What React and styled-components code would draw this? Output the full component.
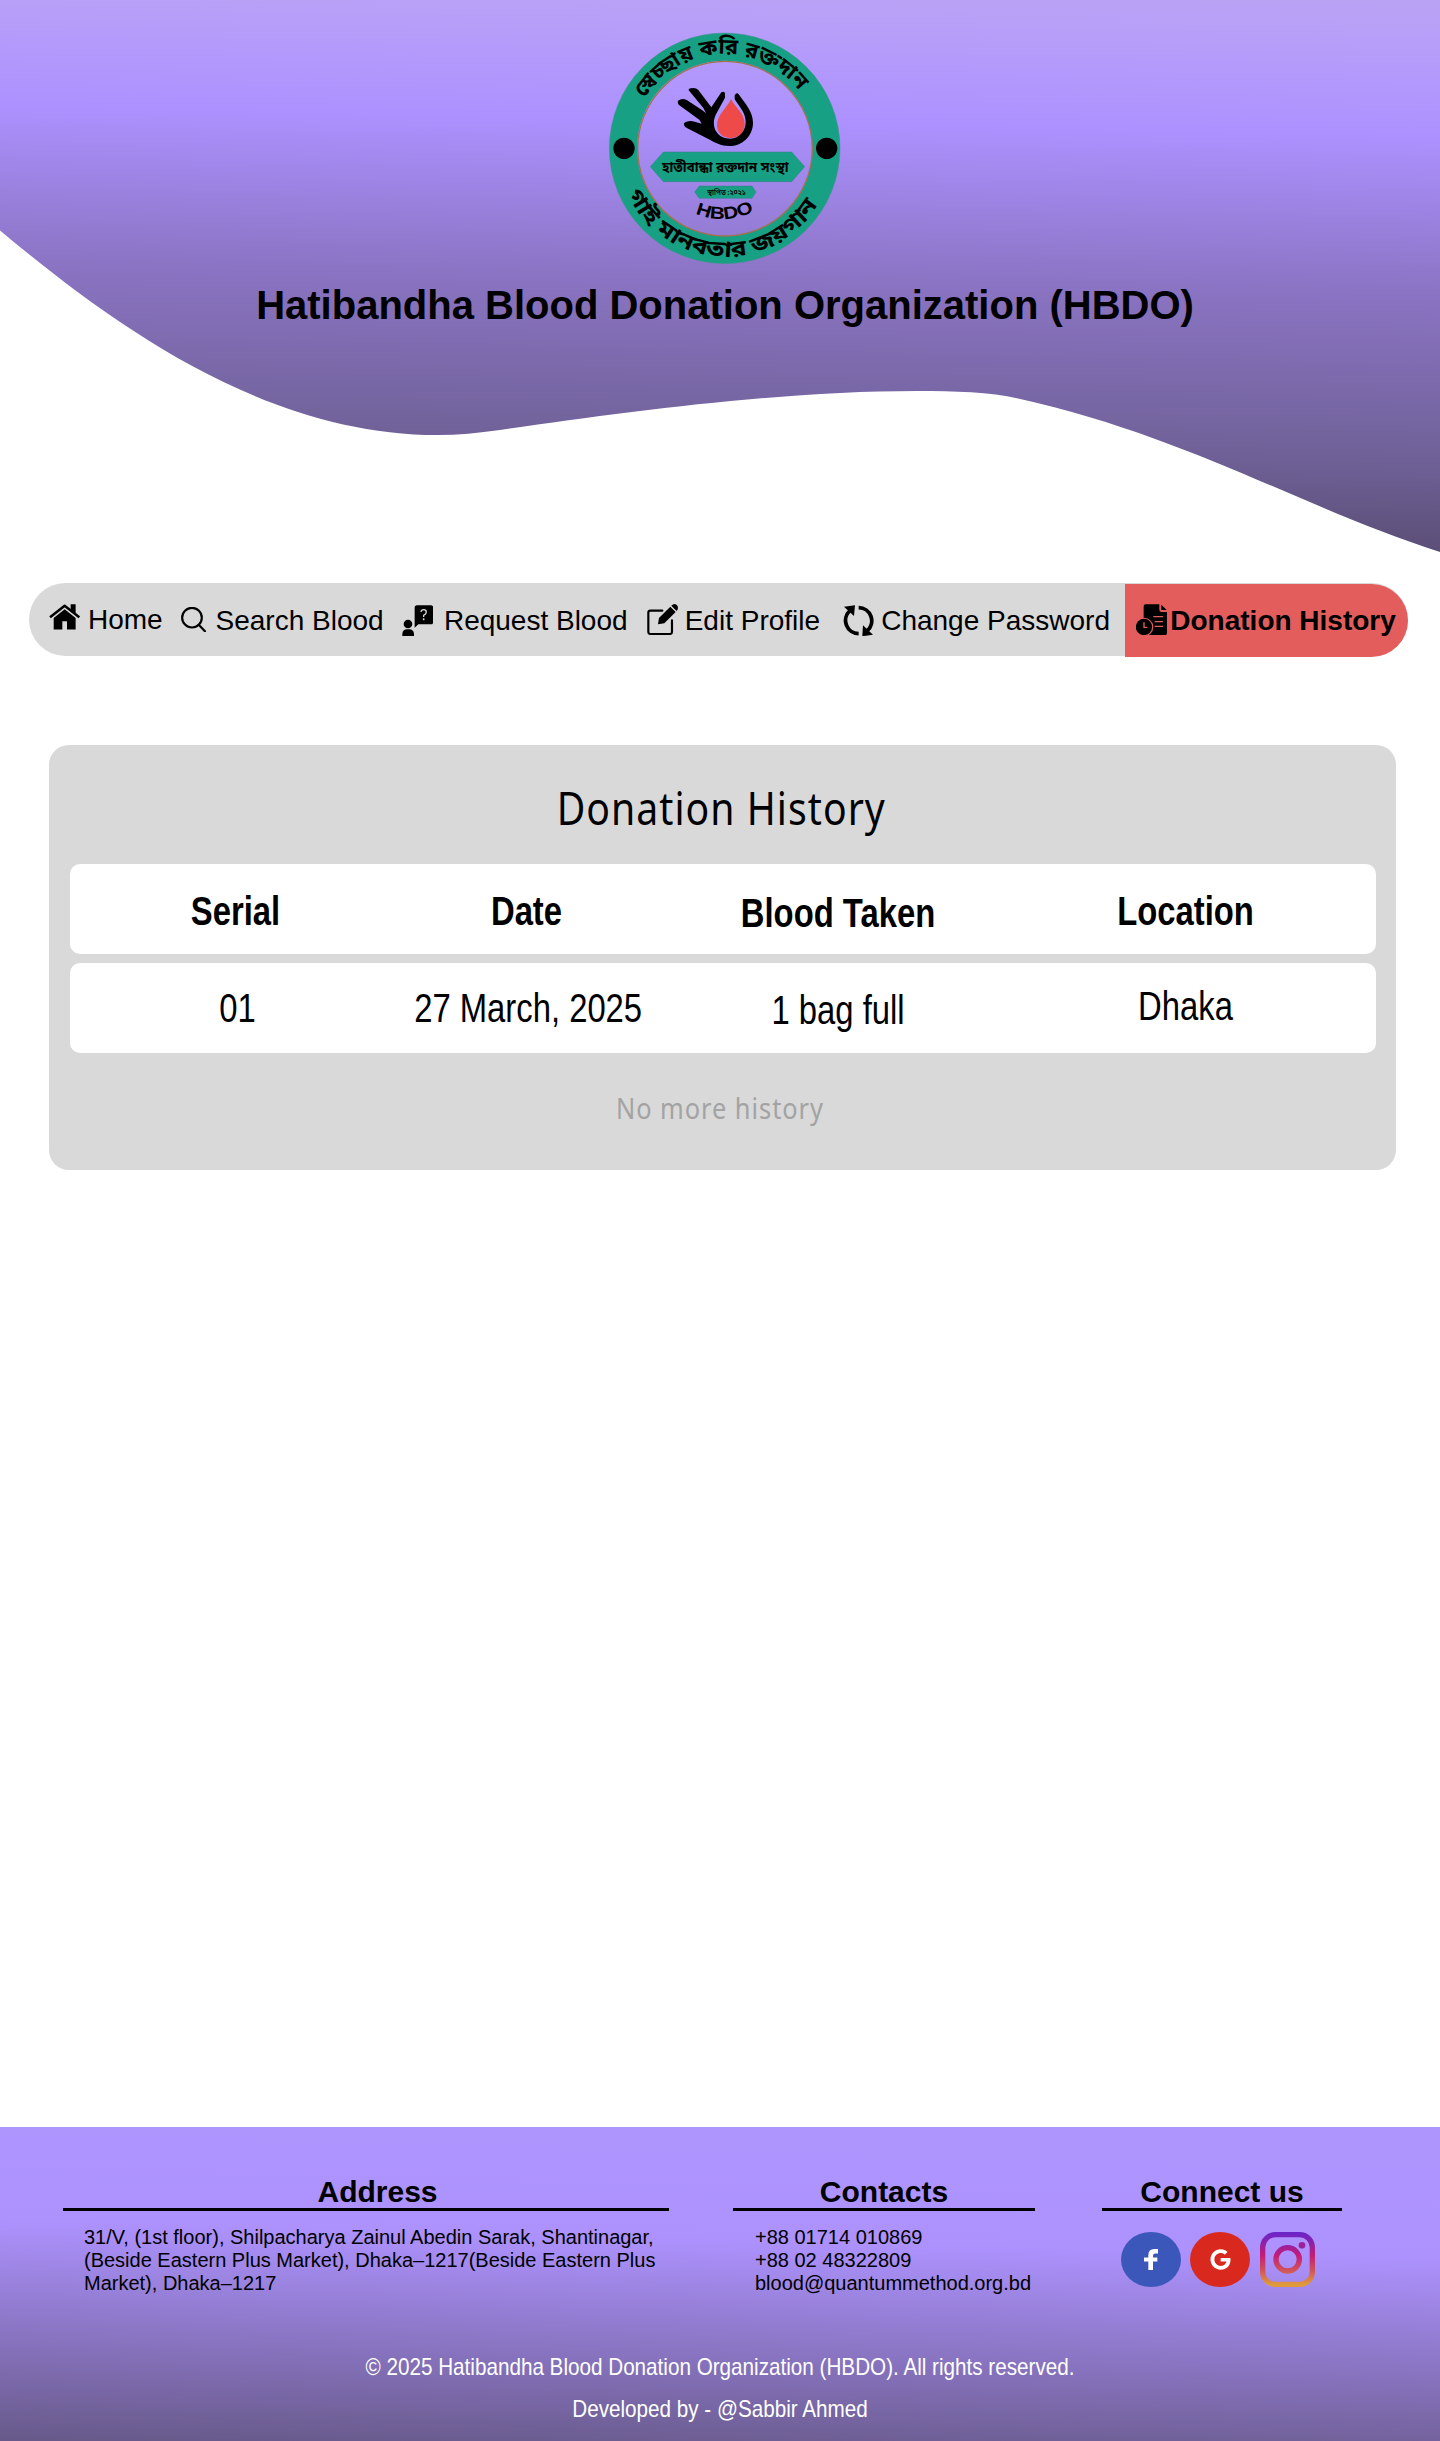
import React from "react";
import styled, { createGlobalStyle } from "styled-components";
import { FaGoogle } from "react-icons/fa";

const sans = `"Liberation Sans", Arial, sans-serif`;
const humanist = `"Noto Sans", "Open Sans", sans-serif`;

const GlobalStyle = createGlobalStyle`
  *, *::before, *::after { box-sizing: border-box; }
  body { margin: 0; background: #fff; color: #000; font-family: ${sans}; }
  h1, h2, h3, p, ul { margin: 0; padding: 0; font-weight: inherit; }
  svg { display: block; }
`;

const Page = styled.div`
  width: 1440px;
  min-height: 2441px;
  display: flex;
  flex-direction: column;
`;

const Header = styled.header`
  height: 552px;
  padding: 20px 0 0 10px;
  display: flex;
  flex-direction: column;
  align-items: center;
  background: linear-gradient(
    181.23deg,
    #b9a2f3 0%,
    #b8a0f8 5.3%,
    #ad91ff 23.3%,
    #8b74c4 50%,
    #6f6197 79%,
    #5b4e76 95%
  );
  clip-path: path(
    "M0 0 H1440 V552 C1300 507 1190 437 1018 398.5 C990 392 955 391 917 391 C780 391 625 412 500 430 C478 433 458 435 438 435 C262 435 110 322 0 230.5 Z"
  );
`;

const OrgName = styled.h1`
  margin-top: 11px;
  font-size: 40px;
  line-height: 48px;
  font-weight: 700;
  white-space: nowrap;
`;

const NavBar = styled.nav`
  width: 1379px;
  height: 73px;
  margin: 31px 0 0 29px;
  padding-left: 20px;
  display: flex;
  align-items: flex-start;
  background: #d9d9d9;
  border-radius: 36.5px;
`;

const NavItem = styled.a`
  height: 73px;
  margin-left: ${(p) => p.$before || 0}px;
  display: flex;
  align-items: flex-start;
  gap: ${(p) => p.$gap}px;
  font-size: 28px;
  line-height: 32px;
  white-space: nowrap;
  flex: none;

  svg {
    flex: none;
    margin-top: ${(p) => p.$iconTop}px;
  }
  span {
    margin-top: ${(p) => p.$textTop || 22}px;
  }
`;

const ActiveItem = styled(NavItem)`
  width: 283px;
  margin-top: 1px;
  padding-left: 11px;
  background: #e45d5d;
  border-radius: 0 36.5px 36.5px 0;
  font-weight: 700;
`;

const Main = styled.main`
  flex: 1;
  padding: 89px 44px 0 49px;
`;

const Card = styled.section`
  height: 425px;
  padding: 0 20px 0 21px;
  background: #d9d9d9;
  border-radius: 20px;
`;

const CardTitle = styled.h2`
  height: 119px;
  padding: 33px 4px 0 0;
  text-align: center;
  font-family: ${humanist};
  font-size: 45px;
  line-height: 60px;
  letter-spacing: 1.2px;
  transform: scaleX(0.87);
`;

const Row = styled.div`
  height: 90px;
  margin-bottom: 9px;
  display: grid;
  grid-template-columns: 331px 251px 372px 323px;
  background: #fff;
  border-radius: 10px;
`;

const Cell = styled.div`
  padding: ${(p) => p.$top}px 0 0 ${(p) => p.$shift || 0}px;
  display: flex;
  justify-content: center;
  font-size: 40px;
  line-height: 46px;
  white-space: nowrap;
  font-weight: ${(p) => (p.$head ? 700 : 400)};
  transform: scaleX(0.82);
`;

const EmptyNote = styled.p`
  padding: 26px 7px 0 0;
  text-align: center;
  font-family: ${humanist};
  font-size: 29px;
  line-height: 40px;
  letter-spacing: 1.1px;
  color: #a3a3a3;
  transform: scaleX(0.875);
`;

const Footer = styled.footer`
  height: 314px;
  display: flex;
  flex-direction: column;
  background: linear-gradient(181.5deg, #ae95fd 0%, #ad92fe 37%, #675989 100%);
`;

const FooterColumns = styled.div`
  height: 217px;
  padding: 47px 0 0 63px;
  display: flex;
  align-items: flex-start;
`;

const FooterColumn = styled.section`
  width: ${(p) => p.$width}px;
  margin-right: ${(p) => p.$after || 0}px;
  flex: none;
`;

const FooterHeading = styled.h3`
  height: 37px;
  padding-left: ${(p) => p.$shift || 0}px;
  border-bottom: 3px solid #000;
  text-align: center;
  font-size: 30px;
  line-height: 35px;
  font-weight: 700;
`;

const FooterText = styled.p`
  padding: 15px 0 0 ${(p) => p.$indent}px;
  font-size: 20px;
  line-height: 23px;
  white-space: nowrap;
`;

const Socials = styled.div`
  padding: 21px 0 0 19px;
  display: flex;
`;

const SocialDisc = styled.a`
  width: 60px;
  height: 55px;
  margin-right: ${(p) => p.$after}px;
  display: flex;
  align-items: center;
  justify-content: center;
  border-radius: 50%;
  color: #fff;
  background: ${(p) => p.$color};
`;

const Credit = styled.p`
  height: 42px;
  text-align: center;
  font-size: 24px;
  line-height: 46px;
  color: #fff;
  white-space: nowrap;
  transform: scaleX(0.861);
`;

const Logo = () => (
  <svg width="250" height="250" viewBox="0 0 750 750" fontFamily='"Noto Sans Bengali", "Noto Sans", sans-serif'>
    <defs>
      <path id="arcTop" d="M134 236 A280 280 0 0 1 602 220" />
      <path id="arcBottom" d="M82 522 A324 324 0 0 0 662 538" />
      <path id="arcName" d="M286 580 Q372 618 466 572" />
    </defs>
    <circle cx="374" cy="385" r="304.5" fill="none" stroke="#17a084" strokeWidth="83" />
    <circle cx="375" cy="386" r="262" fill="none" stroke="#a3714f" strokeWidth="4" />
    <circle cx="374" cy="385" r="346" fill="none" stroke="#4f8f90" strokeWidth="1.5" />
    <circle cx="72" cy="385" r="32" />
    <circle cx="680" cy="385" r="32" />
    <text fontSize="64" fontWeight="700">
      <textPath href="#arcTop" textLength="545" lengthAdjust="spacingAndGlyphs">স্বেচ্ছায় করি রক্তদান</textPath>
    </text>
    <text fontSize="66" fontWeight="700">
      <textPath href="#arcBottom" textLength="700" lengthAdjust="spacingAndGlyphs">গাই মানবতার জয়গান</textPath>
    </text>
    <path d="M334 262L364 217Q370 212 375 219V233L348 283C339 300 340 320 348 334C358 350 374 356 391 356C418 355 437 332 437 306C437 280 420 262 404 238V226Q410 216 416 223C434 248 459 275 459 308C459 350 425 378 388 378C362 378 345 368 325 357L262 325Q250 319 252 309Q266 299 284 305L305 311L298 299L240 257Q231 251 234 242Q246 233 260 240L306 270L318 280L310 264L268 213Q262 207 272 205Q286 201 295 210Z" />
    <path d="M393 237C405 262 434 280 434 312C434 338 415 354 392 354C368 354 351 338 351 315C351 285 380 265 393 237Z" fill="#ee4a4a" />
    <g fill="#17a084" stroke="#35808a" strokeWidth="1.5">
      <path d="M151 440L190 396H575L614 440L575 485H190Z" />
      <path d="M284 516L298 498H456L468 516L456 535H298Z" />
    </g>
    <text x="186" y="455" fontSize="42" fontWeight="700" textLength="380" lengthAdjust="spacingAndGlyphs">হাতীবান্ধা রক্তদান সংস্থা</text>
    <text x="322" y="524" fontSize="23" fontWeight="600" textLength="116" lengthAdjust="spacingAndGlyphs">স্থাপিত :২০২১</text>
    <text fontFamily='"Liberation Sans", sans-serif' fontSize="52" fontWeight="700">
      <textPath href="#arcName" textLength="182" lengthAdjust="spacingAndGlyphs">HBDO</textPath>
    </text>
  </svg>
);

const HomeIcon = () => (
  <svg width="31" height="25.6" viewBox="87 101 93 77">
    <path d="M90 141L134 106L178 141" fill="none" stroke="#000" strokeWidth="7.5" strokeLinejoin="round" />
    <path d="M152 102H167V132L152 120Z" />
    <path d="M134 117L167 143V178H141V153H127V178H101V143Z" />
  </svg>
);

const SearchIcon = () => (
  <svg width="25.3" height="25.3" viewBox="482 110 76 76" fill="none" stroke="#000" strokeWidth="6.5" strokeLinecap="round">
    <circle cx="515" cy="142" r="29.5" />
    <path d="M536 164L554 183" />
  </svg>
);

const RequestIcon = () => (
  <svg width="31.3" height="31.3" viewBox="1145 104 94 94">
    <path d="M1190 105H1231Q1239 105 1239 113V154Q1239 162 1231 162H1194L1183 172V113Q1183 105 1190 105Z" />
    <path d="M1202 125Q1203 118 1210 118Q1218 118 1218 126Q1218 131 1210 135V140" fill="none" stroke="#d9d9d9" strokeWidth="4" />
    <circle cx="1210" cy="147" r="3" fill="#d9d9d9" />
    <circle cx="1163" cy="161" r="13" />
    <path d="M1146 198V191Q1147 177 1160 177H1167Q1180 177 1181 191V198Z" />
  </svg>
);

const EditIcon = () => (
  <svg width="31.3" height="31.3" viewBox="471 101 94 94">
    <path d="M517 121H481Q475 121 475 127V185Q475 191 481 191H540Q546 191 546 185V150" fill="none" stroke="#000" strokeWidth="6.5" strokeLinecap="round" />
    <path d="M504 162L507 143L541 109L557 125L523 159Z" />
    <path d="M544 106Q549 101 554 101Q564 104 564 113Q564 118 560 122Z" />
  </svg>
);

const ChangeIcon = () => (
  <svg width="31.3" height="31.3" viewBox="1059 104 94 94">
    <g fill="none" stroke="#000" strokeWidth="11.5">
      <path d="M1106 190A39.5 39.5 0 0 1 1080 121" />
      <path d="M1106 112A39.5 39.5 0 0 1 1132 181" />
    </g>
    <path d="M1062 109L1095 105L1092 137Z" />
    <path d="M1117 198L1119 165L1149 193Z" />
  </svg>
);

const HistoryIcon = () => (
  <svg width="31.3" height="31.3" viewBox="528 101 94 94">
    <path d="M557 102H598V118Q598 125 605 125H621V188Q621 195 614 195H568L551 146V108Q551 102 557 102Z" />
    <path d="M604 103L620 119H604Z" />
    <path d="M580 139H609M584 154H609M584 168H609" stroke="#e45d5d" strokeWidth="3.5" />
    <circle cx="552" cy="170" r="28" fill="#e45d5d" />
    <circle cx="552" cy="170" r="24.5" />
    <path d="M552 156V171H562" fill="none" stroke="#e45d5d" strokeWidth="4" />
  </svg>
);

const FacebookIcon = () => (
  <svg width="14" height="21.5" viewBox="0 0 42 64" fill="#fff">
    <path d="M13 64V37H0V25H13V18Q13 0 31 0H42V13H34Q27 13 27 19V25H40V37H27V64Z" />
  </svg>
);

const InstagramIcon = () => (
  <svg width="55" height="55" viewBox="0 0 165 165">
    <defs>
      <linearGradient id="insta" gradientUnits="userSpaceOnUse" x1="0" y1="0" x2="0" y2="165">
        <stop offset="0" stopColor="#6a26c8" />
        <stop offset="0.12" stopColor="#7d22b8" />
        <stop offset="0.42" stopColor="#c31c78" />
        <stop offset="0.7" stopColor="#d0545a" />
        <stop offset="0.95" stopColor="#e09a3c" />
      </linearGradient>
    </defs>
    <g fill="none" stroke="url(#insta)" strokeWidth="16">
      <rect x="8" y="8" width="149" height="149" rx="38" />
      <circle cx="83" cy="82" r="35" />
    </g>
    <circle cx="126" cy="40" r="10" fill="#9c1f9c" />
  </svg>
);

const records = [{ serial: "01", date: "27 March, 2025", amount: "1 bag full", place: "Dhaka" }];

export default function App() {
  return (
    <>
      <GlobalStyle />
      <Page>
        <Header>
          <Logo />
          <OrgName>Hatibandha Blood Donation Organization (HBDO)</OrgName>
        </Header>

        <NavBar>
          <NavItem $gap={8} $iconTop={21} $textTop={21}><HomeIcon /><span>Home</span></NavItem>
          <NavItem $before={18.5} $gap={9} $iconTop={24}><SearchIcon /><span>Search Blood</span></NavItem>
          <NavItem $before={18} $gap={11} $iconTop={22}><RequestIcon /><span>Request Blood</span></NavItem>
          <NavItem $before={19.3} $gap={6.5} $iconTop={21}><EditIcon /><span>Edit Profile</span></NavItem>
          <NavItem $before={22.6} $gap={7.2} $iconTop={22}><ChangeIcon /><span>Change Password</span></NavItem>
          <ActiveItem $before={15} $gap={3} $iconTop={20} $textTop={21}><HistoryIcon /><span>Donation History</span></ActiveItem>
        </NavBar>

        <Main>
          <Card>
            <CardTitle>Donation History</CardTitle>
            <Row>
              <Cell $head $top={24}>Serial</Cell>
              <Cell $head $top={24}>Date</Cell>
              <Cell $head $top={26}>Blood Taken</Cell>
              <Cell $head $top={24}>Location</Cell>
            </Row>
            {records.map((r) => (
              <Row key={r.serial}>
                <Cell $top={22} $shift={5}>{r.serial}</Cell>
                <Cell $top={22} $shift={4}>{r.date}</Cell>
                <Cell $top={24}>{r.amount}</Cell>
                <Cell $top={20}>{r.place}</Cell>
              </Row>
            ))}
            <EmptyNote>No more history</EmptyNote>
          </Card>
        </Main>

        <Footer>
          <FooterColumns>
            <FooterColumn $width={606} $after={64}>
              <FooterHeading $shift={23}>Address</FooterHeading>
              <FooterText $indent={21}>
                31/V, (1st floor), Shilpacharya Zainul Abedin Sarak, Shantinagar,
                <br />
                (Beside Eastern Plus Market), Dhaka–1217(Beside Eastern Plus
                <br />
                Market), Dhaka–1217
              </FooterText>
            </FooterColumn>
            <FooterColumn $width={302} $after={67}>
              <FooterHeading>Contacts</FooterHeading>
              <FooterText $indent={22}>
                +88 01714 010869
                <br />
                +88 02 48322809
                <br />
                blood@quantummethod.org.bd
              </FooterText>
            </FooterColumn>
            <FooterColumn $width={240}>
              <FooterHeading>Connect us</FooterHeading>
              <Socials>
                <SocialDisc $color="#3b57b9" $after={9}><FacebookIcon /></SocialDisc>
                <SocialDisc $color="#d9291f" $after={10}><FaGoogle size={21} /></SocialDisc>
                <InstagramIcon />
              </Socials>
            </FooterColumn>
          </FooterColumns>
          <Credit>© 2025 Hatibandha Blood Donation Organization (HBDO). All rights reserved.</Credit>
          <Credit>Developed by - @Sabbir Ahmed</Credit>
        </Footer>
      </Page>
    </>
  );
}
